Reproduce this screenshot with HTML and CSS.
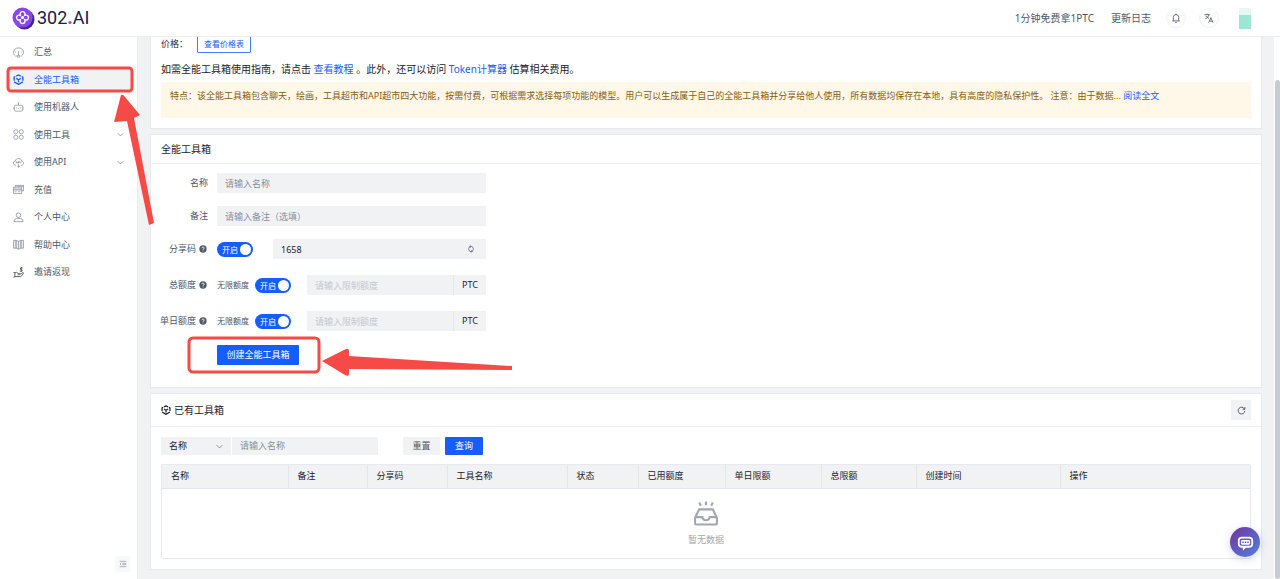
FILE: index.html
```html
<!DOCTYPE html>
<html lang="zh-CN">
<head>
<meta charset="utf-8">
<title>302.AI</title>
<link rel="stylesheet" href="styles.css">
</head>
<body>
<svg class="defs" aria-hidden="true">
  <symbol id="cube" viewBox="0 0 24 24"><path d="M7 4.500 12 2 17 4.500M19 5.500 21.500 7V14.500M21.500 17 12 22.500 2.500 17M2.500 14.500V7L5 5.500M7 9.500 12 12.500 17 9.500M12 12.500V18"/></symbol>
  <symbol id="help" viewBox="0 0 24 24"><circle cx="12" cy="12" r="11" fill="#4e5969" stroke="none"/><path d="M8.500 9.500C8.500 5 15.500 5 15.500 9.500 15.500 12 12 12 12 14.500M12 16.500V19" stroke="#fff" stroke-width="2.500"/></symbol>
  <symbol id="down" viewBox="0 0 24 24"><path d="M2 7 12 17 22 7"/></symbol>
</svg>

<header class="header">
  <a class="logo" href="#">
    <svg class="logo-mark" viewBox="0 0 24 24" aria-hidden="true"><circle cx="13" cy="13" r="10.500" fill="#3b2a8c"/><circle cx="11" cy="11" r="10.500" fill="#8a45ee"/><path d="M8.800 8.800C6.500 3.500 15.500 3.500 13.200 8.800 18.500 6.500 18.500 15.500 13.200 13.200 15.500 18.500 6.500 18.500 8.800 13.200 3.500 15.500 3.500 6.500 8.800 8.800ZM9.500 11H12.500M11 9.500V12.500" fill="none" stroke="#fff" stroke-width="1.400"/></svg>
    <span class="logo-text">302<b>.</b>AI</span>
  </a>
  <nav class="tools">
    <a href="#">1分钟免费拿1PTC</a>
    <a href="#">更新日志</a>
    <button class="round" aria-label="通知"><svg class="icon" viewBox="0 0 24 24"><path d="M3 19H21M5.500 19V10C5.500 2 18.500 2 18.500 10V19M10 22.500H14M12 1V4"/></svg></button>
    <button class="round" aria-label="语言"><svg class="icon" viewBox="0 0 24 24"><path d="M1 4H14M7.500 1.500V4M3 14C8 12 11 8 11.500 4M4 7C6 10 9 12 12 13M11.500 23 16.500 11 21.500 23M13.500 19.500H19.500"/></svg></button>
    <span class="avatar"></span>
  </nav>
</header>

<div class="shell">
  <aside class="sidebar">
    <nav class="menu">
      <a class="item" href="#"><svg class="icon" viewBox="0 0 24 24"><path d="M6 20C-3 14 1 2 12 2S27 14 18 20M12 9V18M9 18H15V22H9ZM5 11H7M17 11H19M7 6 8 7M17 6 16 7"/></svg>汇总</a>
      <a class="item active" href="#"><svg class="icon"><use href="#cube"/></svg>全能工具箱</a>
      <a class="item" href="#"><svg class="icon" viewBox="0 0 24 24"><path d="M6 7H18Q21 7 21 10V17Q21 20 18 20H6Q3 20 3 17V10Q3 7 6 7ZM12 2V7M10 2H14M0 11V16M24 11V16M8 12V14M16 12V14M11 14H13"/></svg>使用机器人</a>
      <a class="item" href="#"><svg class="icon" viewBox="0 0 24 24"><circle cx="6" cy="6" r="4.500"/><circle cx="18" cy="6" r="4.500"/><circle cx="6" cy="18" r="4.500"/><circle cx="18" cy="18" r="4.500"/></svg>使用工具<svg class="icon chevron"><use href="#down"/></svg></a>
      <a class="item" href="#"><svg class="icon" viewBox="0 0 24 24"><path d="M7 18H5C-1 17 0 9 5 9 6 1 18 1 19 9 25 10 24 17 19 18H17M7 14 8.500 10 10 14M12 14V10H14V12H12M17 10V14M12 16V22M9 20 12 22 15 20"/></svg>使用API<svg class="icon chevron"><use href="#down"/></svg></a>
      <a class="item" href="#"><svg class="icon" viewBox="0 0 24 24"><path d="M5 7V3H23V15H19M1 7H19V21H1ZM1 11H19M1 13H19M4 17H8M11 17H16M8 5H23"/></svg>充值</a>
      <a class="item" href="#"><svg class="icon" viewBox="0 0 24 24"><circle cx="12" cy="7" r="5"/><path d="M8 14H16Q21 14 22 21H2Q3 14 8 14Z"/></svg>个人中心</a>
      <a class="item" href="#"><svg class="icon" viewBox="0 0 24 24"><path d="M12 5Q7 2 1 3V20Q7 19 12 22 17 19 23 20V3Q17 2 12 5V22M5 3V20M8 4V20M16 4V20M19 3V20"/></svg>帮助中心</a>
      <a class="item" href="#"><svg class="icon bold" viewBox="0 0 24 24"><path d="M1 12H4V22H1M4 13Q8 10 11 14H15Q17 16 14 17H10M16 16 21 12Q24 12 22 15L17 21H4M21 2H17Q14 5 18 5.500 22 6 19 9H15M18 0V11"/></svg>邀请返现</a>
    </nav>
    <button class="collapse" aria-label="收起菜单"><svg class="icon" viewBox="0 0 24 24"><path d="M2 4H22M10 10H22M10 14H22M2 20H22M7 8 3 12 7 16"/></svg></button>
  </aside>

  <main class="content">
    <section class="card intro">
      <div class="price"><span>价格：</span><button class="outline">查看价格表</button></div>
      <p class="guide">如需全能工具箱使用指南，请点击 <a href="#">查看教程</a> 。此外，还可以访问 <a href="#">Token计算器</a> 估算相关费用。</p>
      <p class="notice">特点：该全能工具箱包含聊天，绘画，工具超市和API超市四大功能，按需付费，可根据需求选择每项功能的模型。用户可以生成属于自己的全能工具箱并分享给他人使用，所有数据均保存在本地，具有高度的隐私保护性。 注意：由于数据... <a href="#">阅读全文</a></p>
    </section>

    <section class="card">
      <h2 class="title">全能工具箱</h2>
      <form class="form">
        <div class="row"><label class="label" for="name">名称</label><input class="field" id="name" placeholder="请输入名称"></div>
        <div class="row"><label class="label" for="remark">备注</label><input class="field" id="remark" placeholder="请输入备注（选填）"></div>
        <div class="row"><label class="label" for="code">分享码<svg class="help"><use href="#help"/></svg></label>
          <div class="line wide"><button type="button" class="switch" role="switch" aria-checked="true">开启</button>
          <div class="group"><input id="code" value="1658"><svg class="icon suffix" viewBox="0 0 24 24"><path d="M8 5Q12 3 16 5 23 12 16 19M16 19Q12 21 8 19 1 12 8 5M12 1 8 5 12 8M12 16 16 19 12 23"/></svg></div></div></div>
        <div class="row quota"><label class="label" for="total">总额度<svg class="help"><use href="#help"/></svg></label>
          <div class="line"><span class="hint">无限额度</span><button type="button" class="switch" role="switch" aria-checked="true">开启</button>
          <div class="group limit"><input id="total" placeholder="请输入限制额度" disabled><span class="unit">PTC</span></div></div></div>
        <div class="row quota"><label class="label" for="daily">单日额度<svg class="help"><use href="#help"/></svg></label>
          <div class="line"><span class="hint">无限额度</span><button type="button" class="switch" role="switch" aria-checked="true">开启</button>
          <div class="group limit"><input id="daily" placeholder="请输入限制额度" disabled><span class="unit">PTC</span></div></div></div>
        <button type="button" class="primary create">创建全能工具箱</button>
      </form>
    </section>

    <section class="card list">
      <div class="title bar"><h2><svg class="icon"><use href="#cube"/></svg>已有工具箱</h2>
        <button class="refresh" aria-label="刷新"><svg class="icon" viewBox="0 0 24 24"><path d="M20 8A9 9 0 1 0 21 13M21 3V9H15"/></svg></button></div>
      <div class="body">
        <div class="search">
          <div class="pick"><select aria-label="搜索字段"><option>名称</option></select><svg class="icon"><use href="#down"/></svg></div>
          <input class="query" aria-label="搜索" placeholder="请输入名称">
          <button class="reset">重置</button><button class="primary find">查询</button>
        </div>
        <div class="table-box">
        <table class="table">
          <colgroup><col class="c126"><col class="c79"><col class="c80"><col class="c120"><col class="c71"><col class="c87"><col class="c96"><col class="c95"><col class="c144"><col></colgroup>
          <thead><tr><th>名称</th><th>备注</th><th>分享码</th><th>工具名称</th><th>状态</th><th>已用额度</th><th>单日限额</th><th>总限额</th><th>创建时间</th><th>操作</th></tr></thead>
          <tbody><tr><td colspan="10"><div class="empty"><svg viewBox="0 0 48 48" aria-hidden="true"><path d="M3 32 11 16H37L45 32V43Q45 45 43 45H5Q3 45 3 43ZM3 31H17Q18 37 24 37T31 31H45M24 1V8M11 3 14 9M37 3 34 9"/></svg>暂无数据</div></td></tr></tbody>
        </table>
        </div>
      </div>
    </section>
  </main>
  <div class="scroll"><div class="thumb"></div></div>
</div>

<button class="chat" aria-label="客服"><svg viewBox="0 0 24 24"><path d="M7 5H17Q21.500 5 21.500 9V14Q21.500 18 17 18H12L9.500 20.500V18H7Q2.500 18 2.500 14V9Q2.500 5 7 5Z" fill="none" stroke="#fff" stroke-width="2.500"/><rect x="5.500" y="8.500" width="13" height="6.500" rx="2" fill="#fff"/><path d="M7.500 11.700H9.500M11 11.700H13M14.500 11.700H16.500" stroke="#5f4bb5" stroke-width="2.200"/></svg></button>

<svg class="marks" aria-hidden="true">
  <rect x="8" y="68" width="124" height="23" rx="3"/><rect x="189" y="338" width="130" height="34" rx="4"/>
  <path d="M121 95Q123 94 125 97L140 115 134 118 154 223 149 225 127 121 114 122ZM322 361 346 349Q349 348 349 351L349 356 512 366V370L349 369V374Q349 377 345 375Z"/>
</svg>
</body>
</html>
```
FILE: styles.css
```css
* { box-sizing: border-box; }
body {
  margin: 0;
  height: 100vh;
  display: flex;
  flex-direction: column;
  overflow: hidden;
  font: 9px/14px "Noto Sans", "Noto Sans CJK SC", sans-serif;
  color: #4e5969;
  background: #fff;
}
a { color: #165dff; text-decoration: none; }
button, input, select { font: inherit; color: inherit; border: 0; padding: 0; margin: 0; border-radius: 1px; min-width: 0; }
input { outline: 0; background: #f1f2f4; padding: 0 8px; }
input::placeholder { color: #86909c; opacity: 1; }
input:disabled::placeholder { color: #c3c8d1; }
h2, p { margin: 0; font-weight: 400; }
.defs { display: none; }
.icon { width: 10px; height: 10px; flex: none; fill: none; stroke: currentColor; stroke-width: 2; }

.header { height: 37px; flex: none; display: flex; align-items: center; justify-content: space-between; padding: 0 29px 0 12px; border-bottom: 1px solid #eceef1; }
.logo { display: flex; align-items: center; gap: 2px; color: #15204a; }
.logo-mark { width: 23px; height: 23px; }
.logo-text { font: 400 18px/24px Roboto, sans-serif; }
.logo-text b { color: #a044f0; font-weight: 900; }
.tools { display: flex; align-items: center; font-size: 10px; }
.tools a { color: #4e5969; margin-right: 17px; }
.tools a + a { margin-right: 15px; }
.round { width: 20px; height: 20px; margin-right: 13px; border: 1px solid #f1f2f4; border-radius: 50%; background: #fff; display: grid; place-items: center; }
.avatar { width: 12px; height: 21px; margin-left: 7px; background: linear-gradient(#e7f8f4 7px, #9de5d6 7px); }

.shell { flex: 1; min-height: 0; display: flex; }
.sidebar { width: 138px; flex: none; display: flex; flex-direction: column; justify-content: space-between; border-right: 1px solid #e9ebef; padding: 3px 6px 7px 8px; }
.menu { height: 244px; display: flex; flex-direction: column; justify-content: space-between; }
.item { height: 24px; line-height: 24px; display: flex; align-items: center; gap: 10px; padding: 0 5px; color: #4e5969; }
.item .icon { stroke-width: 1.500; color: #7b8594; }
.item .bold { stroke-width: 2; color: #4e5969; }
.item > .icon:first-child { width: 11px; height: 11px; }
.item.active { background: #f1f2f4; color: #165dff; }
.item.active > .icon:first-child { color: #165dff; stroke-width: 3; }
.item .chevron { margin: 0 2px 0 auto; width: 7px; height: 7px; stroke-width: 2.500; }
.collapse { width: 15px; height: 16px; align-self: flex-end; background: #f7f8fa; display: grid; place-items: center; color: #86909c; margin-right: 1px; }
.collapse .icon { width: 8px; height: 8px; }

.content { flex: 1; min-width: 0; overflow: hidden; background: #f1f2f4; padding: 0 12px 9px 12px; display: flex; flex-direction: column; gap: 5px; }
.card { flex: none; background: #fff; border: 1px solid #e7e9ee; }
.intro { border-top: 0; padding: 0 10px 10px; margin-top: -3px; }
.price { display: flex; gap: 9px; align-items: center; height: 20px; color: #1d2129; }
.outline { height: 17px; width: 54px; background: #fff; border: 1px solid #4080ff; color: #165dff; font-size: 8px; line-height: 14px; }
.guide { font-size: 10px; line-height: 16px; color: #1d2129; margin: 7px 0 5px; }
.notice { min-height: 36px; padding: 7px 9px; background: #fff7e8; color: #866010; }

.title { font-size: 10px; line-height: 28px; color: #1d2129; padding-left: 10px; border-bottom: 1px solid #eceef1; }
.form { padding: 9px 10px 22px 0; display: flex; flex-direction: column; gap: 13px; }
.row { display: flex; align-items: center; gap: 9px; height: 20px; }
.row.quota { margin-top: 3px; }
.label { width: 57px; display: flex; justify-content: flex-end; align-items: center; gap: 3px; white-space: nowrap; }
.label .help { width: 8px; height: 8px; fill: none; margin-right: 1px; }
.hint { font-size: 8px; }
.field, .line { width: 269px; height: 20px; }
.line { display: flex; align-items: center; gap: 6px; white-space: nowrap; }
.line.wide { gap: 20px; }
.switch { width: 36px; height: 15px; flex: none; border-radius: 8px; background: #165dff; color: #fff; font-size: 8px; line-height: 15px; padding: 0 2px 0 5px; display: flex; align-items: center; justify-content: space-between; }
.switch::after { content: ""; width: 11px; height: 11px; flex: none; border-radius: 50%; background: #fff; }
.group { flex: 1; min-width: 0; height: 20px; display: flex; align-items: center; background: #f1f2f4; color: #1d2129; }
.group input { flex: 1; height: 20px; }
.group .suffix { width: 8px; height: 8px; margin-right: 11px; color: #4e5969; }
.limit { margin-left: 10px; }
.unit { width: 33px; line-height: 20px; text-align: center; border-left: 1px solid #e5e6eb; }
.primary { background: #165dff; color: #fff; }
.create { width: 82px; height: 20px; margin: 1px 0 0 66px; }

.bar { display: flex; align-items: center; justify-content: space-between; height: 33px; padding-right: 10px; }
.bar h2 { display: flex; align-items: center; gap: 3px; font-size: 10px; }
.bar .icon { stroke-width: 3; }
.bar .refresh .icon { width: 9px; height: 9px; stroke-width: 2.500; }
.refresh { width: 20px; height: 20px; background: #f1f2f4; display: grid; place-items: center; color: #4e5969; }
.body { padding: 10px; }
.search { display: flex; height: 18px; }
.pick { width: 70px; display: flex; align-items: center; background: #f1f2f4; color: #1d2129; padding-right: 8px; margin-right: 1px; }
.pick select { flex: 1; appearance: none; background: none; padding-left: 8px; outline: 0; }
.pick .icon { width: 7px; height: 7px; color: #4e5969; }
.query { width: 146px; }
.reset { width: 37px; background: #f1f2f4; margin: 0 5px 0 25px; }
.find { width: 38px; }
.table-box { margin-top: 9px; border: 1px solid #e7e9ee; border-radius: 2px; }
.table { width: 100%; table-layout: fixed; border-collapse: collapse; }
.table th { height: 23px; padding: 0 9px; text-align: left; font-weight: 400; color: #1d2129; background: #f1f2f4; border-bottom: 1px solid #e5e6eb; border-right: 1px solid #e5e6eb; }
.table th:last-child { border-right: 0; }
.table td { padding: 0; }
.c126 { width: 126px; } .c79 { width: 79px; } .c80 { width: 80px; } .c120 { width: 120px; } .c71 { width: 71px; }
.c87 { width: 87px; } .c96 { width: 96px; } .c95 { width: 95px; } .c144 { width: 144px; }
.empty { height: 69px; display: flex; flex-direction: column; align-items: center; padding-top: 12px; gap: 7px; color: #a0a7b2; }
.empty svg { width: 26px; height: 25px; flex: none; fill: none; stroke: #a0a7b2; stroke-width: 4; }

.scroll { width: 6px; flex: none; padding-left: 1px; background: #fff; display: flex; flex-direction: column; justify-content: flex-end; }
.thumb { height: 92%; background: #c7cbd2; border-radius: 3px; }
.chat { position: absolute; right: 20px; bottom: 22px; width: 30px; height: 30px; border-radius: 50%; background: linear-gradient(135deg, #7033a0, #5281de); box-shadow: 0 2px 8px #5060a040; display: grid; place-items: center; }
.chat svg { width: 17px; height: 17px; }
.marks { position: absolute; left: 0; top: 0; width: 520px; height: 390px; pointer-events: none; fill: #f54a45; }
.marks rect { fill: none; stroke: #f54a45; stroke-width: 3; }
```
